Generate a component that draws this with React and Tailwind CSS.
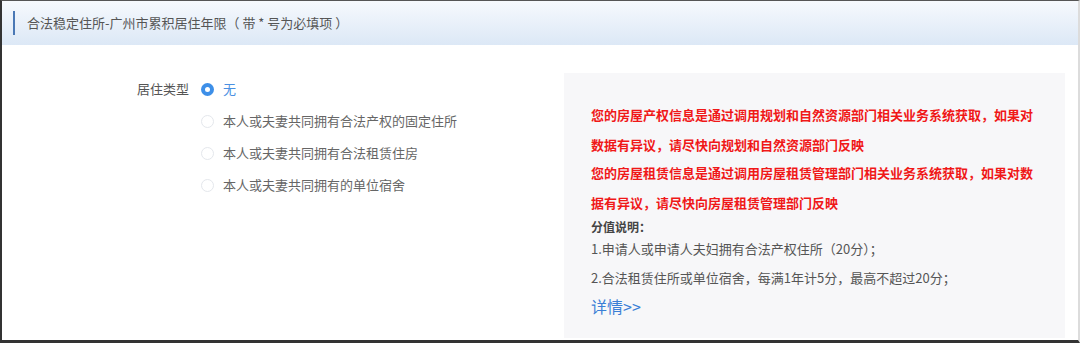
import React from "react";

const options = [
  { label: "无", checked: true },
  { label: "本人或夫妻共同拥有合法产权的固定住所" },
  { label: "本人或夫妻共同拥有合法租赁住房" },
  { label: "本人或夫妻共同拥有的单位宿舍" },
];

function Radio({ checked }) {
  if (checked) {
    return (
      <span className="w-[13px] h-[13px] rounded-full bg-[#3d8fe8] flex items-center justify-center shrink-0">
        <span className="w-[5px] h-[5px] rounded-full bg-white" />
      </span>
    );
  }
  return <span className="w-[13px] h-[13px] rounded-full border border-[#e4e7ec] bg-white shrink-0" />;
}

export default function App() {
  return (
    <div
      className="w-[1080px] h-[343px] bg-white border-t border-l-2 border-b-[3px] border-r-2 border-t-[#555] border-l-[#333] border-b-[#333] border-r-[#dcdcdc] flex flex-col overflow-hidden"
      style={{ fontFamily: '"Noto Sans CJK SC", "Noto Sans", sans-serif' }}
    >
      {/* Header */}
      <div className="h-[44px] shrink-0 bg-gradient-to-b from-[#f6f9fd] to-[#dce8f6] flex items-center pl-[11px]">
        <span className="w-[2px] h-[24px] bg-[#4a78b5] mr-[12px]" />
        <span className="text-[13px] text-[#555]">合法稳定住所-广州市累积居住年限（ 带 * 号为必填项 ）</span>
      </div>

      {/* Body */}
      <div className="flex pt-[28px]">
        <div className="w-[562px] shrink-0 flex pl-[135px] pt-[5px]">
          <div className="text-[13px] text-[#555] leading-[22px] w-[64px]">居住类型</div>
          <div className="flex flex-col gap-[10px]">
            {options.map((o) => (
              <div key={o.label} className="flex items-center gap-[9px] h-[22px]">
                <Radio checked={o.checked} />
                <span className={`text-[13px] ${o.checked ? "text-[#4a90e2]" : "text-[#666]"}`}>{o.label}</span>
              </div>
            ))}
          </div>
        </div>

        <div className="w-[501px] h-[265px] bg-[#f7f7f9] pl-[27px] pr-[20px] pt-[27px]">
          <div className="w-[452px] text-[13px] font-bold text-[#f01818]">
            <p className="leading-[30px]">您的房屋产权信息是通过调用规划和自然资源部门相关业务系统获取，如果对数据有异议，请尽快向规划和自然资源部门反映</p>
            <p className="leading-[30px] mt-[-2px]">您的房屋租赁信息是通过调用房屋租赁管理部门相关业务系统获取，如果对数据有异议，请尽快向房屋租赁管理部门反映</p>
          </div>
          <div className="text-[12px] font-bold text-[#444] leading-[20px] mt-[-1px]">分值说明：</div>
          <div className="text-[13px] text-[#555]">
            <p className="leading-[22px] mt-[1px]">1.申请人或申请人夫妇拥有合法产权住所（20分）；</p>
            <p className="leading-[30px] mt-[3px]">2.合法租赁住所或单位宿舍，每满1年计5分，最高不超过20分；</p>
          </div>
          <div className="text-[16px] text-[#3a7fd6] leading-[26px]">详情&gt;&gt;</div>
        </div>
      </div>
    </div>
  );
}
